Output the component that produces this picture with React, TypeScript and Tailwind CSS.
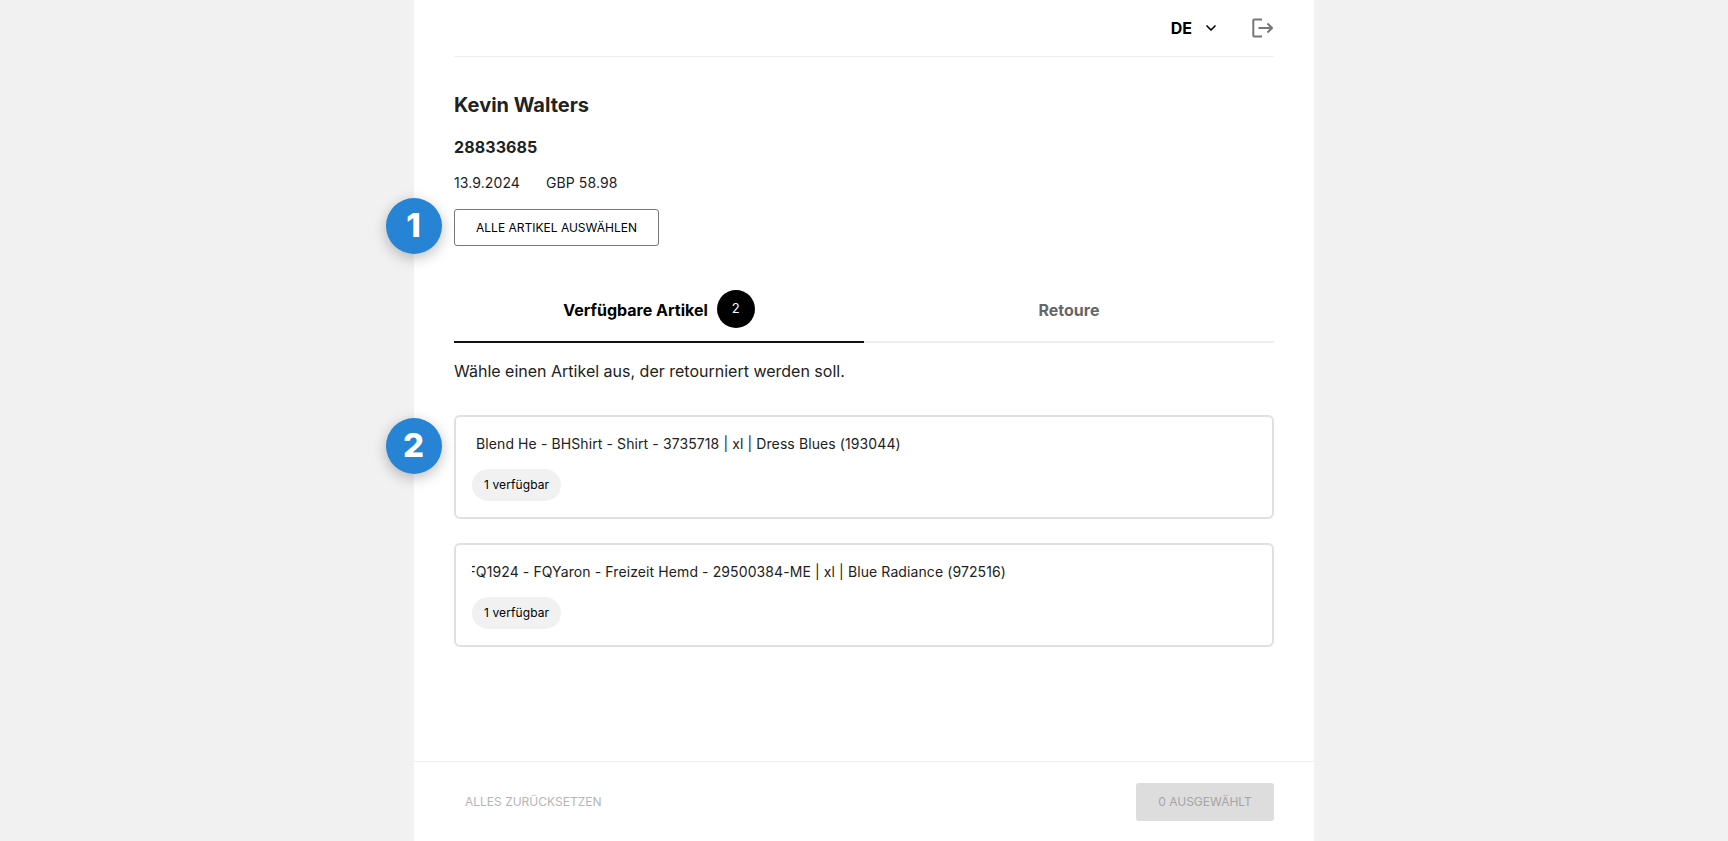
import React from "react";
import { ChevronDown } from "lucide-react";

const articles = [
  { id: 1, name: "Blend He - BHShirt - Shirt - 3735718 | xl | Dress Blues (193044)", offset: "ml-[4px]" },
  { id: 2, name: "FQ1924 - FQYaron - Freizeit Hemd - 29500384-ME | xl | Blue Radiance (972516)", offset: "-ml-[4.5px]" },
];

function StepBadge({ label, className }: { label: string; className: string }) {
  return (
    <div
      className={`absolute left-[-28px] flex h-14 w-14 items-center justify-center rounded-full bg-[#2784d4] pr-px text-[33px] font-extrabold text-white shadow-[0_4px_14px_rgba(0,0,0,0.25)] ${className}`}>
      {label}
    </div>
  );
}

function ExitIcon() {
  return (
    <svg width="21" height="20" viewBox="0 0 21 20" fill="none" stroke="#777777" strokeWidth="2">
      <path d="M10 1.5H2.2a.9.9 0 0 0-.9.9v15.2a.9.9 0 0 0 .9.9H10" />
      <path d="M6.5 10h13.5M15.5 5.5l4.5 4.5-4.5 4.5" />
    </svg>
  );
}

export default function App() {
  return (
    <div className="flex h-[841px] justify-center overflow-hidden bg-[#f1f1f1] font-['Inter',sans-serif] text-[#222222]">
      <div className="relative flex w-[900px] flex-col bg-white">
        <StepBadge label="1" className="top-[198px]" />
        <StepBadge label="2" className="top-[418px]" />

        <div className="flex flex-1 flex-col px-10">
          <header className="flex h-[57px] items-center justify-end border-b border-[#eeeeee] pr-[1px]">
            <span className="text-base font-bold text-black">DE</span>
            <ChevronDown size={16} strokeWidth={2.5} className="ml-[11px] text-black" />
            <span className="ml-[33px] flex">
              <ExitIcon />
            </span>
          </header>

          <h1 className="mt-[33px] text-[20px] leading-[30px] font-bold">Kevin Walters</h1>
          <p className="mt-[15px] text-base leading-6 font-bold tracking-[0.1px]">28833685</p>
          <div className="mt-[12px] flex gap-[26px] text-sm leading-6 tracking-[0.1px]">
            <span>13.9.2024</span>
            <span>GBP 58.98</span>
          </div>
          <button className="mt-[14px] h-[37px] w-[205px] rounded-[3px] border border-[#777777] bg-white text-xs text-black">
            ALLE ARTIKEL AUSWÄHLEN
          </button>

          <div className="mt-[44px] flex h-[53px] border-b-2 border-[#eeeeee]">
            <div className="-mb-[2px] flex w-[410px] items-start justify-center gap-[9px] border-b-2 border-[#111111]">
              <span className="mt-[9px] text-base leading-[22px] font-bold text-black">Verfügbare Artikel</span>
              <span className="flex h-[38px] w-[38px] items-center justify-center rounded-full bg-black text-[13px] text-white">
                2
              </span>
            </div>
            <div className="flex flex-1 justify-center">
              <span className="mt-[9px] text-base leading-[22px] font-bold text-[#666666]">Retoure</span>
            </div>
          </div>

          <p className="mt-[16px] text-base leading-6">Wähle einen Artikel aus, der retourniert werden soll.</p>

          <div className="mt-[32px] flex flex-col gap-6">
            {articles.map((article) => (
              <div key={article.id} className="h-[104px] rounded-[6px] border-2 border-[#e0e0e0] px-4 pt-[17px]">
                <div className="overflow-hidden">
                  <p className={`text-sm leading-[20px] tracking-[0.1px] whitespace-nowrap ${article.offset}`}>{article.name}</p>
                </div>
                <span className="mt-[15px] inline-flex h-8 items-center rounded-full bg-[#f1f1f1] px-3 text-xs tracking-[0.1px] text-black">
                  1 verfügbar
                </span>
              </div>
            ))}
          </div>
        </div>

        <footer className="flex h-[80px] items-center justify-between border-t border-[#eeeeee] pr-10 pl-[51px]">
          <button className="text-xs text-[#b5b5b5]">ALLES ZURÜCKSETZEN</button>
          <button className="h-[38px] w-[138px] rounded-[3px] bg-[#dddddd] text-xs text-[#a5a5a5]">0 AUSGEWÄHLT</button>
        </footer>
      </div>
    </div>
  );
}
